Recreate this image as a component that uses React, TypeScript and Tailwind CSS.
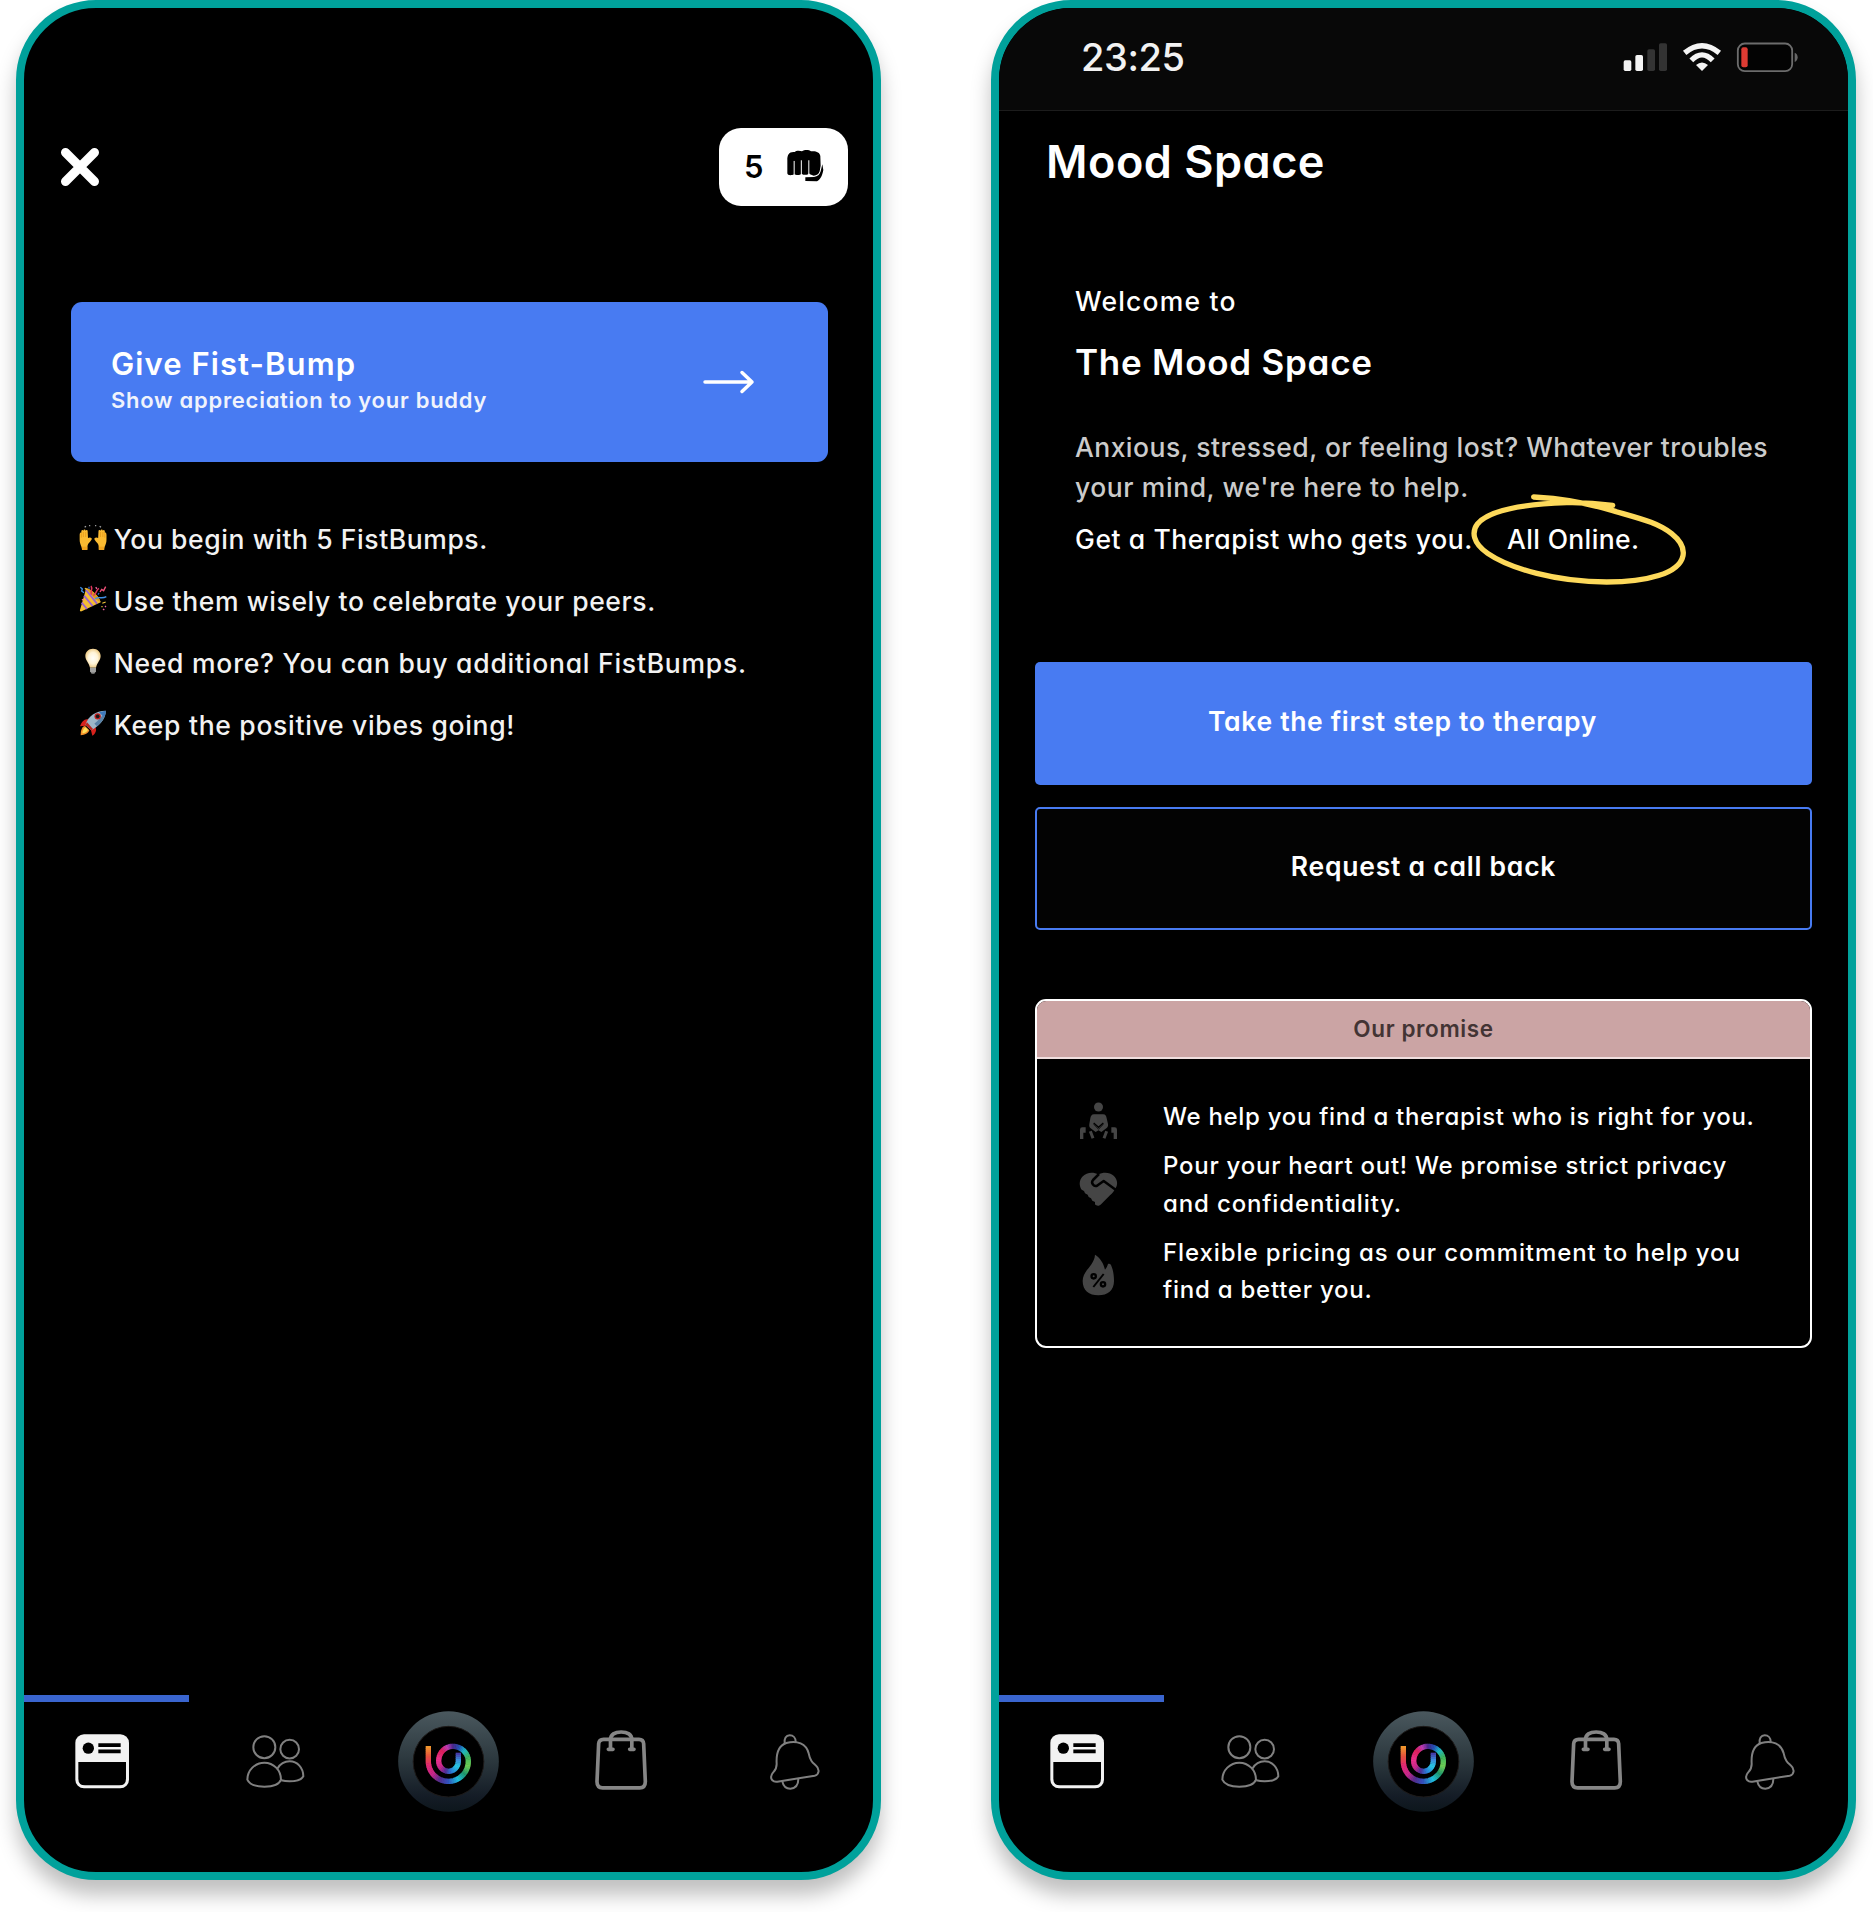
import React from "react";

function lerpColor(stops: [number, number[]][], t: number) {
  let i = 0;
  while (i < stops.length - 2 && t > stops[i + 1][0]) i++;
  const [a, ca] = stops[i];
  const [b, cb] = stops[i + 1];
  const k = Math.min(1, Math.max(0, (t - a) / (b - a)));
  return `rgb(${ca.map((v, j) => Math.round(v + (cb[j] - v) * k)).join(",")})`;
}

function arc(cx: number, cy: number, rx: number, ry: number, from: number, to: number, n: number) {
  return Array.from({ length: n }, (_, i) => {
    const a = ((from + ((to - from) * (i + 1)) / n) * Math.PI) / 180;
    return [cx + rx * Math.cos(a), cy + ry * Math.sin(a)];
  });
}

const spiral: number[][] = [
  [145, 198],
  ...Array.from({ length: 8 }, (_, i) => [145, 198 + (47 * (i + 1)) / 8]),
  ...arc(205, 244, 60, 60, 180, 0, 36),
  ...arc(218, 244, 47, 45, 0, -90, 16),
  ...arc(218, 243, 42, 44, -90, -180, 14),
  ...arc(206, 243, 30, 31, 180, 90, 10),
  ...arc(206, 243, 29, 31, 90, 0, 10),
  ...Array.from({ length: 4 }, (_, i) => [235, 243 - (25 * (i + 1)) / 4]),
];

const spiralStops: [number, number[]][] = [
  [0, [240, 150, 45]],
  [0.05, [228, 80, 60]],
  [0.1, [226, 40, 115]],
  [0.16, [200, 40, 140]],
  [0.21, [84, 44, 140]],
  [0.26, [50, 80, 190]],
  [0.32, [30, 190, 220]],
  [0.37, [30, 150, 110]],
  [0.42, [110, 205, 85]],
  [0.48, [60, 180, 95]],
  [0.53, [30, 185, 200]],
  [0.57, [35, 80, 180]],
  [0.61, [70, 40, 140]],
  [0.65, [190, 60, 180]],
  [0.69, [220, 30, 90]],
  [0.75, [235, 50, 140]],
  [0.8, [200, 40, 140]],
  [0.84, [80, 45, 150]],
  [0.88, [40, 130, 220]],
  [0.93, [40, 200, 225]],
  [0.97, [60, 140, 220]],
  [1, [70, 60, 170]],
];

function LogoButton() {
  return (
    <svg viewBox="54 93 303 303" className="h-[101px] w-[101px]">
      <defs>
        <linearGradient id="ring" x1="0" y1="0" x2="0" y2="1">
          <stop offset="0" stopColor="#4a585e" />
          <stop offset="0.5" stopColor="#2b373d" />
          <stop offset="0.85" stopColor="#141c26" />
          <stop offset="1" stopColor="#0d161c" />
        </linearGradient>
      </defs>
      <circle cx="205.500" cy="244.500" r="151" fill="url(#ring)" />
      <circle cx="205.500" cy="245" r="106" fill="#000" stroke="#1d1a19" strokeWidth="3" />
      {spiral.slice(1).map((p, i) => {
        const q = spiral[i];
        const r = spiral[Math.min(i + 2, spiral.length - 1)];
        return (
          <path
            key={i}
            d={`M${q[0]} ${q[1]}L${p[0]} ${p[1]}L${p[0] + (r[0] - p[0]) * 0.3} ${p[1] + (r[1] - p[1]) * 0.3}`}
            fill="none"
            stroke={lerpColor(spiralStops, i / (spiral.length - 2))}
            strokeWidth="16"
          />
        );
      })}
    </svg>
  );
}

function FeedIcon() {
  return (
    <svg viewBox="222 160 169 170" className="h-[56.670px] w-[56.330px]">
      <rect x="226" y="164" width="161" height="162" rx="26" fill="#f2f2f2" />
      <path d="M235 247H378V297Q378 317 358 317H255Q235 317 235 297Z" fill="#000" />
      <circle cx="265" cy="205.500" r="17" fill="#000" />
      <path d="M295 190.500H362V202H295ZM295 209.500H362V221H295Z" fill="#000" />
      <path d="M295 205.500H362" stroke="#fff" strokeWidth="2" />
    </svg>
  );
}

function PeopleIcon() {
  return (
    <svg viewBox="735 160 183 170" className="h-[56.670px] w-[61px]" fill="none" stroke="#808080" strokeWidth="6">
      <circle cx="793" cy="202.500" r="33" />
      <circle cx="869" cy="208.500" r="28" />
      <path d="M742 300C742 272 765 249 793 249C821 249 843 272 843 300C838 314 818 321 793 321C768 321 748 314 742 300Z" />
      <path d="M832 267C841 252 854 245 869 245C892 245 910 264 910 290C904 301 888 305 869 305C860 305 851 304 844 302" />
    </svg>
  );
}

function BagIcon() {
  return (
    <svg viewBox="640 150 170 190" className="h-[63.330px] w-[56.670px]" fill="none" stroke="#868686" strokeWidth="11">
      <path d="M672 178H778Q791 178 792 191L797 305Q797 323 780 323.500H669Q652 323 652 305L657 191Q658 178 672 178Z" />
      <path d="M692.500 206V180C692 163 706 156 724.500 156C743 156 757 163 756.500 180V206" />
      <path d="M686 208H700M750 208H763" strokeLinecap="round" />
    </svg>
  );
}

function BellIcon() {
  return (
    <svg viewBox="1160 155 168 180" className="h-[60px] w-[56px]" fill="none" stroke="#808080" strokeWidth="6" strokeLinecap="round">
      <path d="M1213 189C1211 174 1217 165 1228 165C1239 165 1246 173 1246 184" />
      <path d="M1173 286C1176 273 1189 274 1189 251C1187 217 1196 195 1218 188C1250 179 1278 190 1285 219C1290 243 1297 247 1306 255C1319 266 1317 283 1303 286L1191 304C1178 306 1170 297 1173 286Z" />
      <path d="M1206 303C1209 318 1218 325 1230 325C1245 324 1254 313 1254 296" />
    </svg>
  );
}

function BottomNav() {
  return (
    <nav className="mt-auto h-[177px] w-full shrink-0">
      <div className="h-[7px] w-[165px] bg-[#3a65cf]" />
      <div className="mt-[9px] flex h-[101px] justify-between px-7">
        {[<FeedIcon />, <PeopleIcon />, <LogoButton />, <BagIcon />, <BellIcon />].map((icon, i) => (
          <div key={i} className="flex w-[101px] items-center justify-center">
            {icon}
          </div>
        ))}
      </div>
    </nav>
  );
}

function Phone({ children }: { children: React.ReactNode }) {
  return (
    <section className="flex h-[1880px] w-[865px] shrink-0 flex-col overflow-hidden rounded-[80px] border-8 border-[#00a19b] bg-black text-white shadow-[0_15px_20px_0_rgba(0,0,0,0.25)]">
      {children}
    </section>
  );
}

function FistIcon() {
  return (
    <svg viewBox="320 147 116 100" className="h-[33.330px] w-[38.670px]">
      <path
        d="M324 181C323 164 330 154 346 156C350 151 362 151 368 154C375 149 389 149 395 154C408 152 422 156 423 168L424 197L421 214C418 223 412 227 403 227C395 225 391 223 389 220C386 226 372 226 367 221C362 226 350 227 345 222C338 227 324 227 324 220Z"
        fill="#000"
      />
      <path d="M429 193L432 210C429 226 424 238 413 244L378 243V232L404 231C415 230 421 224 424 214Z" fill="#000" />
      <path d="M344.500 184V222M366 182V223M388.500 182V222" stroke="#fff" strokeWidth="3" strokeLinecap="round" />
    </svg>
  );
}

function HandsEmoji() {
  return (
    <svg viewBox="58 70 86 84" className="h-7 w-[28.670px]">
      <path d="M75 83L79 80M90 80V76M108 80V76M120 80L124 83" stroke="#a8a8a8" strokeWidth="3.500" />
      {["", "translate(200.500 0) scale(-1 1)"].map((t) => (
        <g key={t} transform={t}>
          <path
            d="M60 106C60 100 62 97 65 99V94C66 90 70 90 71 93C72 88 77 88 78 93C80 90 84 91 84 95L85 115C88 114 92 112 96 116C98 119 93 125 87 131C84 134 83 139 83 150H67C67 140 60 134 60 120Z"
            fill="#fbbb31"
          />
          <path d="M71 97V112M78 97V112M65 101V114" stroke="#df8f14" strokeWidth="1.800" />
          <path d="M67 141H83V151H67Z" fill="#f2a51f" />
        </g>
      ))}
    </svg>
  );
}

function PartyEmoji() {
  return (
    <svg viewBox="58 255 86 84" className="h-7 w-[28.670px]">
      <path d="M80 264C95 268 118 288 123 307L66 334C62 335 60 333 61 330Z" fill="#f6bd33" />
      <path d="M82 266C98 268 120 292 123 306C108 300 90 282 82 266Z" fill="#dc9a20" />
      <path d="M73 287L99 318M66 308L82 327M79 270L112 311" stroke="#9b62d0" strokeWidth="5.500" />
      <path d="M96 284C90 272 101 268 94 258M101 287C113 280 108 270 118 265" stroke="#e0355a" strokeWidth="4.500" fill="none" />
      <path d="M106 297C117 288 126 298 140 290M62 262L68 267L66 273L73 278" stroke="#3f8fe4" strokeWidth="4" fill="none" />
      <path d="M121 276L126 268L132 272L138 260" stroke="#ee4f77" strokeWidth="4" fill="none" />
      <path d="M67 298L71 301M108 262L112 266M130 327L134 330M136 318L139 321" stroke="#ef66a4" strokeWidth="4" />
      <path d="M128 310L138 306M76 264L80 269M127 318V322" stroke="#f4c63c" strokeWidth="3.500" />
      <path d="M88 260V266M118 279L115 284" stroke="#2d62d2" strokeWidth="4" />
    </svg>
  );
}

function BulbEmoji() {
  return (
    <svg viewBox="58 440 86 84" className="h-7 w-[28.670px]">
      <defs>
        <radialGradient id="bulb">
          <stop offset="0" stopColor="#fffefa" />
          <stop offset="0.6" stopColor="#fff4d8" />
          <stop offset="1" stopColor="#efce8c" />
        </radialGradient>
      </defs>
      <path d="M100 445C86 445 77 455 77 467C77 480 88 487 91 502H109C112 487 123 480 123 467C123 455 114 445 100 445Z" fill="url(#bulb)" />
      <path d="M91 502H109V513L104 520H96L91 513Z" fill="#8d8d8b" />
      <path d="M91 506H109M92 512H108" stroke="#cfcfcd" strokeWidth="2" />
    </svg>
  );
}

function RocketEmoji() {
  return (
    <svg viewBox="58 628 86 84" className="h-7 w-[28.670px]">
      <path d="M86 659C75 656 66 665 61 680L78 678ZM106 681C113 690 108 702 98 708L93 688Z" fill="#d8221c" />
      <path d="M76 679C68 680 63 690 63 707C76 706 86 701 89 692Z" fill="#f5912a" />
      <path d="M78 683C72 686 69 693 68 701C76 700 82 697 85 690Z" fill="#fde05a" />
      <path d="M138 633C139 652 127 673 95 692L77 676C86 647 108 634 138 633Z" fill="#9db7c9" />
      <path d="M138 633C139 648 131 664 112 680L104 672C118 660 130 648 138 633Z" fill="#5a83a8" />
      <path d="M118 638C124 636 131 634 138 633C138 640 136 647 133 653Z" fill="#3f79bb" />
      <circle cx="114" cy="650" r="9.500" fill="#c2201f" />
      <circle cx="114" cy="650" r="5.500" fill="#15181c" />
      <path d="M77 676L95 692L100 688L82 668Z" fill="#b9261f" />
    </svg>
  );
}

const tips = [
  { icon: <HandsEmoji />, text: "You begin with 5 FistBumps.", tracking: "tracking-[0.58px]" },
  { icon: <PartyEmoji />, text: "Use them wisely to celebrate your peers.", tracking: "tracking-[0.6px]" },
  { icon: <BulbEmoji />, text: "Need more? You can buy additional FistBumps.", tracking: "tracking-[0.76px]" },
  { icon: <RocketEmoji />, text: "Keep the positive vibes going!", tracking: "tracking-[0.7px]" },
];

function FistBumpScreen() {
  return (
    <Phone>
      <header className="mt-[120px] flex h-[78px] shrink-0 items-center justify-between pr-[25px] pl-[36px]">
        <svg viewBox="0 0 40 40" className="-mt-px h-10 w-10" stroke="#fff" strokeWidth="9" strokeLinecap="round">
          <path d="M5.500 5.500L34.500 34.500M34.500 5.500L5.500 34.500" />
        </svg>
        <div className="flex h-[78px] w-[129px] items-center justify-between rounded-[22px] bg-white pr-[23px] pb-0.5 pl-[25px] text-black">
          <span className="text-[31px] leading-none font-semibold">5</span>
          <FistIcon />
        </div>
      </header>
      <button className="mt-[96px] mr-[45px] ml-[47px] flex h-[160px] shrink-0 items-start justify-between rounded-[11px] bg-[#487bf2] pt-[42px] pr-[73px] pl-[40px] text-left">
        <span className="flex flex-col items-start">
          <span className="text-[31px] leading-10 font-semibold tracking-[1.08px]">Give Fist-Bump</span>
          <span className="text-[22px] leading-8 font-semibold tracking-[0.73px] text-[#f0f3fc]">Show appreciation to your buddy</span>
        </span>
        <svg viewBox="0 0 52 24" className="mt-[26px] h-6 w-[52px]" fill="none" stroke="#fff" strokeWidth="3.500" strokeLinecap="round" strokeLinejoin="round">
          <path d="M2 12H49M39 2.500L49 12L39 21.500" />
        </svg>
      </button>
      <ul className="mt-[45.500px] ml-[55px] text-[26.5px] text-[#f2f2f2]">
        {tips.map((tip) => (
          <li key={tip.text} className="flex h-[62.200px] items-center gap-[6px] whitespace-nowrap">
            <span className="-mt-1">{tip.icon}</span>
            <span className={`leading-10 font-[450] ${tip.tracking}`}>{tip.text}</span>
          </li>
        ))}
      </ul>
      <BottomNav />
    </Phone>
  );
}

function StatusIcons() {
  return (
    <svg viewBox="180 120 540 105" className="h-[35px] w-[180px]">
      <rect x="191" y="181" width="23" height="32" rx="5" fill="#f4f4f4" />
      <rect x="226" y="165" width="23" height="48" rx="5" fill="#f4f4f4" />
      <rect x="262" y="148" width="23" height="65" rx="5" fill="#333" />
      <rect x="297" y="130" width="24" height="83" rx="5" fill="#333" />
      <g fill="none" stroke="#f4f4f4" strokeWidth="16">
        <path d="M374 158.500Q426 115.500 478 158.500" />
        <path d="M394 181Q426 148 458 181" />
      </g>
      <path d="M408 195Q426 180 444 195L426 213Z" fill="#f4f4f4" />
      <rect x="533.500" y="130.500" width="163" height="83" rx="21" fill="#030303" stroke="#6c6c6c" strokeWidth="5.500" />
      <rect x="544" y="142" width="19" height="60" rx="6" fill="#dd3b33" />
      <path d="M704 158Q713 162 713 172Q713 182 704 186Z" fill="#666" />
    </svg>
  );
}

function TherapistIcon() {
  return (
    <svg viewBox="174 359 126 126" className="h-[42px] w-[42px] shrink-0">
      <circle cx="235.500" cy="380" r="13.500" fill="#454545" />
      <path d="M222 402H249C257 402 259 408 260 414L264 431C265 437 263 441 259 444L244 455L235.500 450L227 455L212 444C208 441 207 437 208 431L211 414C212 408 215 402 222 402Z" fill="#454545" />
      <path d="M221 428L235.500 441L250 428" fill="none" stroke="#000" strokeWidth="4" />
      <path d="M221 432L235.500 447L250 432" fill="none" stroke="#000" strokeWidth="2" />
      <path d="M211 453L219 474M260 453L252 474" stroke="#454545" strokeWidth="9" />
      <path d="M180 476V448Q180 441 187 441H197V457H190V476ZM291 476V448Q291 441 284 441H274V457H281V476Z" fill="#454545" />
    </svg>
  );
}

function HeartShakeIcon() {
  return (
    <svg viewBox="174 567 126 126" className="h-[42px] w-[42px] shrink-0">
      <path d="M235 584C249 575 270 577 281 587C293 598 294 614 287 624C283 632 277 640 270 646L244 672C238 679 230 679 225 673V666L217 662L213 655L206 651L203 644L195 640L192 633L185 629C177 617 177 601 187 590C200 577 220 575 235 584Z" fill="#454545" />
      <path d="M237 582L219 600C212 608 221 623 233 616L251 603L289 631" fill="none" stroke="#000" strokeWidth="7.500" strokeLinejoin="round" />
    </svg>
  );
}

function FlexPriceIcon() {
  return (
    <svg viewBox="174 822 126 126" className="h-[42px] w-[42px] shrink-0">
      <path d="M225 824C241 834 251 850 255 869C260 864 262 858 264 852C270 850 273 853 275 860C280 872 282 888 282 903C282 931 263 946 235 946C207 946 188 931 188 903C188 871 223 857 225 824Z" fill="#454545" />
      <g fill="none" stroke="#000" strokeWidth="7">
        <circle cx="221" cy="889" r="6.500" />
        <circle cx="249" cy="913" r="6.500" />
        <path d="M251 882L220 921" strokeWidth="6" />
      </g>
    </svg>
  );
}

const promises = [
  {
    icon: <TherapistIcon />,
    row: "h-[37.500px]",
    pad: "pt-[2px]",
    lines: [{ text: "We help you find a therapist who is right for you.", tracking: "tracking-[0.69px]" }],
  },
  {
    icon: <HeartShakeIcon />,
    row: "h-[75px]",
    pad: "pt-[22px]",
    lines: [
      { text: "Pour your heart out! We promise strict privacy", tracking: "tracking-[0.75px]" },
      { text: "and confidentiality.", tracking: "tracking-[0.86px]" },
    ],
  },
  {
    icon: <FlexPriceIcon />,
    row: "h-[75px]",
    pad: "pt-[20px]",
    lines: [
      { text: "Flexible pricing as our commitment to help you", tracking: "tracking-[0.91px]" },
      { text: "find a better you.", tracking: "tracking-[0.76px]" },
    ],
  },
];

function MoodSpaceScreen() {
  return (
    <Phone>
      <div className="flex h-[103px] shrink-0 items-start justify-between border-b border-[#1c1c1c] bg-[#080808] pr-[48px] pl-[82px]">
        <span className="mt-[29px] text-[38px] leading-10 font-medium tracking-[-0.4px] text-[#f2f2f2]">23:25</span>
        <span className="mt-8">
          <StatusIcons />
        </span>
      </div>
      <h1 className="mt-[21px] pl-[47px] text-[45px] leading-[60px] font-semibold tracking-[0.5px]">Mood Space</h1>
      <div className="mt-[89px] pl-[76px] text-[26.5px] leading-10 font-[450] whitespace-nowrap">
        <p className="tracking-[1.2px]">Welcome to</p>
        <h2 className="mt-4 text-[35px] leading-[50px] font-semibold tracking-[0.76px]">The Mood Space</h2>
        <p className="mt-10 text-[#cbcbcb]">
          <span className="tracking-[0.46px]">Anxious, stressed, or feeling lost? Whatever troubles</span>
          <br />
          <span className="tracking-[0.56px]">your mind, we're here to help.</span>
        </p>
        <p className="mt-[12px] flex">
          <span className="w-[432px] tracking-[0.58px]">Get a Therapist who gets you.</span>
          <span className="relative tracking-[0.36px]">
            All Online.
            <svg viewBox="90 65 655 285" className="absolute -top-[27px] -left-[37px] h-[95px] w-[218.330px] max-w-none" fill="none" stroke="#fdd95b" strokeWidth="16" strokeLinecap="round">
              <path d="M281 80C360 84 440 98 508 118C600 145 650 155 695 190C725 214 733 235 729 256C718 310 620 335 500 335C350 335 210 295 143 249C98 218 94 184 113 160C150 117 260 101 380 97C430 96 480 100 518 105" />
            </svg>
          </span>
        </p>
      </div>
      <div className="mx-9 mt-[103px] flex flex-col gap-[22px] text-[26.5px] font-semibold">
        <button className="h-[123px] rounded-[5px] bg-[#487bf2] pr-[42px] pb-1 tracking-[0.66px]">Take the first step to therapy</button>
        <button className="h-[123px] rounded-[5px] border-2 border-[#487bf2] bg-[#030303] pb-1 tracking-[0.76px]">Request a call back</button>
      </div>
      <div className="mx-9 mt-[69px] h-[349px] shrink-0 overflow-hidden rounded-[11px] border-2 border-white">
        <div className="h-[58px] border-b-2 border-[#f0dede] bg-[#cba4a4] text-center text-[22.5px] leading-[56px] font-semibold tracking-[0.6px] text-[#433434]">
          Our promise
        </div>
        <div className="flex flex-col gap-[11.500px] pt-[39px] pl-[41px]">
          {promises.map((p) => (
            <div key={p.lines[0].text} className={`flex gap-[43px] ${p.row}`}>
              <span className={p.pad}>{p.icon}</span>
              <p className="text-[24px] leading-[37.500px] font-medium whitespace-nowrap">
                {p.lines.map((l) => (
                  <span key={l.text} className={`block ${l.tracking}`}>{l.text}</span>
                ))}
              </p>
            </div>
          ))}
        </div>
      </div>
      <BottomNav />
    </Phone>
  );
}

export default function App() {
  return (
    <main className="flex h-[1912px] w-[1873px] gap-[110px] overflow-hidden bg-white pl-4 font-['Inter',sans-serif] [font-feature-settings:'cv11']">
      <FistBumpScreen />
      <MoodSpaceScreen />
    </main>
  );
}
